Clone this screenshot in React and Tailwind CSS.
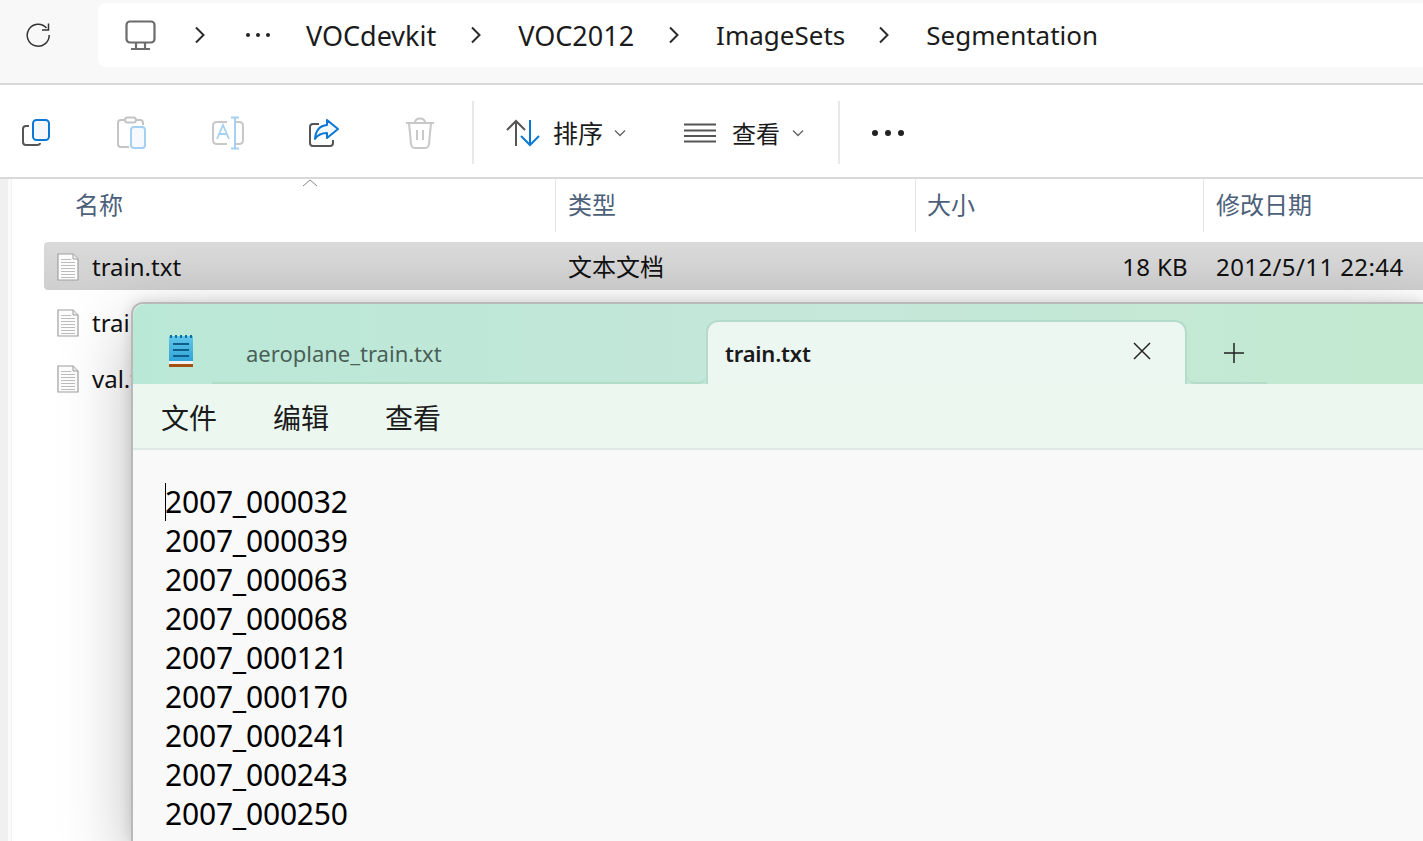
import React from "react";

const fontStack = { fontFamily: '"Noto Sans", "Noto Sans CJK SC", sans-serif' };

const Chevron = () => (
  <svg width="12" height="20" viewBox="0 0 12 20" className="shrink-0">
    <path d="M2 2.5 L9.5 10 L2 17.5" fill="none" stroke="#2b2b2b" strokeWidth="2" />
  </svg>
);

const SmallChevron = () => (
  <svg width="12" height="8" viewBox="0 0 12 8" className="shrink-0">
    <path d="M1 1.5 L6 6.5 L11 1.5" fill="none" stroke="#666" strokeWidth="1.4" />
  </svg>
);

const FileIcon = () => (
  <svg width="22" height="28" viewBox="0 0 22 28" className="shrink-0">
    <path d="M1 1 H16 L21 6 V27 H1 Z" fill="#fdfdfd" stroke="#a0a0a0" strokeWidth="1.2" />
    <path d="M16 1 V6 H21" fill="#eee" stroke="#a0a0a0" strokeWidth="1" />
    <path d="M4 6.5 H14 M4 9.5 H18 M4 12.5 H18 M4 15.5 H18 M4 18.5 H18 M4 21.5 H18 M4 24.5 H18" stroke="#bcbcbc" strokeWidth="1" />
  </svg>
);

const ToolbarIcons = {
  copy: (
    <svg width="30" height="30" viewBox="0 0 30 30">
      <path d="M8 8 H5 Q2 8 2 11 V24 Q2 27 5 27 H16 Q19 27 19 25" fill="none" stroke="#555" strokeWidth="2" />
      <rect x="12" y="2" width="16" height="20" rx="3.5" fill="#f4f8fc" stroke="#0a78d4" strokeWidth="2" />
    </svg>
  ),
  paste: (
    <svg width="30" height="34" viewBox="0 0 30 34">
      <path d="M12 31 H4 Q1 31 1 28 V7 Q1 4 4 4 H23 Q26 4 26 7 V9" fill="none" stroke="#c4c4c4" strokeWidth="2" />
      <rect x="8" y="1.5" width="11" height="5" rx="2.5" fill="#fff" stroke="#c4c4c4" strokeWidth="2" />
      <rect x="14" y="11" width="14" height="21" rx="3" fill="#f6fafe" stroke="#a6d0f2" strokeWidth="2" />
    </svg>
  ),
  rename: (
    <svg width="34" height="34" viewBox="0 0 34 34">
      <path d="M16 6 H6 Q2 6 2 10 V24 Q2 28 6 28 H16 M24 6 H28 Q32 6 32 10 V24 Q32 28 28 28 H24" fill="none" stroke="#c8c8c8" strokeWidth="2" />
      <path d="M6 23 L12 9 L18 23 M8.5 18 H15.5" fill="none" stroke="#a6d0f2" strokeWidth="1.8" />
      <path d="M20 1.5 H28 M24 1.5 V32.5 M20 32.5 H28" fill="none" stroke="#a6d0f2" strokeWidth="2" />
    </svg>
  ),
  share: (
    <svg width="32" height="30" viewBox="0 0 32 30">
      <path d="M11 6 H5 Q2 6 2 9 V25 Q2 28 5 28 H22 Q25 28 25 25 V22" fill="none" stroke="#555" strokeWidth="2" />
      <path d="M19 2 L30 11 L19 20 V15 Q11 15 7 21 Q8 8 19 7 Z" fill="#f4f8fc" stroke="#0a78d4" strokeWidth="2" strokeLinejoin="round" />
    </svg>
  ),
  trash: (
    <svg width="30" height="32" viewBox="0 0 30 32">
      <path d="M1 6 H29 M10 6 Q10 1.5 15 1.5 Q20 1.5 20 6 M4 6 L6 27 Q6.5 31 10 31 H20 Q23.5 31 24 27 L26 6" fill="none" stroke="#c8c8c8" strokeWidth="2" />
      <path d="M12 13 V23 M18 13 V23" stroke="#c8c8c8" strokeWidth="2" />
    </svg>
  ),
};

const files = [
  { name: "train.txt", selected: true },
  { name: "trainval.txt" },
  { name: "val.txt" },
];

const lines = [
  "2007_000032",
  "2007_000039",
  "2007_000063",
  "2007_000068",
  "2007_000121",
  "2007_000170",
  "2007_000241",
  "2007_000243",
  "2007_000250",
];

const App = () => {
  return (
    <div className="relative w-[1423px] h-[841px] overflow-hidden bg-white" style={fontStack}>
      {/* Address bar */}
      <div className="h-[85px] bg-[#f8f8f8] border-b-2 border-[#d9d9d9] flex items-start">
        <div className="w-[98px] h-[70px] flex items-center pl-[25px]">
          <svg width="26" height="26" viewBox="0 0 26 26">
            <path d="M21.5 6 A11 11 0 1 0 24.2 13" fill="none" stroke="#333" strokeWidth="1.5" />
            <path d="M23.5 1.5 V8 H17" fill="none" stroke="#333" strokeWidth="1.5" />
          </svg>
        </div>
        <div className="mt-[3px] flex-1 h-[64px] bg-white rounded-l-lg flex items-center pl-[27px]">
          <svg width="31" height="31" viewBox="0 0 31 31" className="shrink-0">
            <rect x="1.5" y="1.5" width="28" height="21" rx="3.5" fill="none" stroke="#6b6b6b" strokeWidth="2.2" />
            <path d="M11 23 V28 M20 23 V28 M6 29 H25" stroke="#6b6b6b" strokeWidth="2.2" />
          </svg>
          <div className="ml-[38px]"><Chevron /></div>
          <div className="ml-[40px] w-[24px] flex justify-between">
            <span className="w-[4px] h-[4px] rounded-full bg-[#222]" />
            <span className="w-[4px] h-[4px] rounded-full bg-[#222]" />
            <span className="w-[4px] h-[4px] rounded-full bg-[#222]" />
          </div>
          <span className="ml-[36px] text-[27px] leading-none text-[#1b1b1b]">VOCdevkit</span>
          <div className="ml-[34px]"><Chevron /></div>
          <span className="ml-[36px] text-[27px] leading-none text-[#1b1b1b]">VOC2012</span>
          <div className="ml-[34px]"><Chevron /></div>
          <span className="ml-[36px] text-[26px] leading-none text-[#1b1b1b]">ImageSets</span>
          <div className="ml-[33px]"><Chevron /></div>
          <span className="ml-[36px] text-[26px] leading-none text-[#1b1b1b]">Segmentation</span>
        </div>
      </div>

      {/* Command bar */}
      <div className="h-[94px] pt-[3px] border-b-2 border-[#d9d9d9] flex items-center">
        <div className="w-[472px] flex items-center">
          <div className="w-[84px] pl-[21px] flex">{ToolbarIcons.copy}</div>
          <div className="w-[96px] flex justify-center">{ToolbarIcons.paste}</div>
          <div className="w-[96px] flex justify-center">{ToolbarIcons.rename}</div>
          <div className="w-[96px] flex justify-center">{ToolbarIcons.share}</div>
          <div className="w-[96px] flex justify-center">{ToolbarIcons.trash}</div>
        </div>
        <div className="w-[2px] h-[63px] bg-[#e8e8e8]" />
        <div className="ml-[32px] flex items-center w-[146px]">
          <svg width="34" height="28" viewBox="0 0 34 28" className="shrink-0">
            <path d="M10 27 V2 M1 11 L10 2 L19 11" fill="none" stroke="#555" strokeWidth="2" />
            <path d="M24 1 V26 M15 17 L24 26 L33 17" fill="none" stroke="#0a78d4" strokeWidth="2" />
          </svg>
          <span className="ml-[13px] text-[25px] leading-none text-[#1b1b1b] mt-[2px]">排序</span>
          <div className="ml-[11px]"><SmallChevron /></div>
        </div>
        <div className="ml-[32px] flex items-center w-[122px]">
          <svg width="32" height="20" viewBox="0 0 32 20" className="shrink-0">
            <path d="M0 1.5 H32 M0 7.5 H32 M0 13 H32 M0 18.5 H32" stroke="#555" strokeWidth="1.8" />
          </svg>
          <span className="ml-[16px] text-[24px] leading-none text-[#1b1b1b] mt-[2px]">查看</span>
          <div className="ml-[12px]"><SmallChevron /></div>
        </div>
        <div className="ml-[32px] w-[2px] h-[63px] bg-[#e8e8e8]" />
        <div className="ml-[32px] flex gap-[7px]">
          <span className="w-[6px] h-[6px] rounded-full bg-[#222]" />
          <span className="w-[6px] h-[6px] rounded-full bg-[#222]" />
          <span className="w-[6px] h-[6px] rounded-full bg-[#222]" />
        </div>
      </div>

      {/* File list */}
      <div className="flex">
        <div className="w-[12px] h-[662px] bg-[#fbfbfb] border-l-8 border-r border-l-[#f0f0f0] border-r-[#f2f2f2] mr-[32px]" />
        <div className="flex-1">
          <div className="relative h-[53px] flex items-center text-[24px] text-[#4c607a]">
            <svg width="16" height="8" viewBox="0 0 16 8" className="absolute left-[258px] top-0">
              <path d="M1 7 L8 1 L15 7" fill="none" stroke="#888" strokeWidth="1" />
            </svg>
            <div className="w-[512px] h-full flex items-center pl-[31px] pb-[2px] leading-none border-r border-[#e5e5e5]">名称</div>
            <div className="w-[360px] h-full flex items-center pl-[12px] pb-[2px] leading-none border-r border-[#e5e5e5]">类型</div>
            <div className="w-[288px] h-full flex items-center pl-[11px] pb-[2px] leading-none border-r border-[#e5e5e5]">大小</div>
            <div className="pl-[12px] pb-[2px] leading-none">修改日期</div>
          </div>
          <div className="mt-[10px]">
            {files.map((file) => (
              <div
                key={file.name}
                className={`h-[48px] mb-[8px] pt-[2px] flex items-center rounded-l-sm text-[24px] text-[#111] ${
                  file.selected ? "bg-gradient-to-b from-[#dadada] to-[#cfcfcf]" : ""
                }`}
              >
                <div className="w-[524px] flex items-center pl-[13px]">
                  <FileIcon />
                  <span className="ml-[13px] leading-none">{file.name}</span>
                </div>
                {file.selected && (
                  <>
                    <span className="w-[500px] leading-none">文本文档</span>
                    <span className="w-[120px] text-right leading-none tracking-[0.3px]">18 KB</span>
                    <span className="ml-[28px] leading-none whitespace-nowrap tracking-[0.4px]">2012/5/11 22:44</span>
                  </>
                )}
              </div>
            ))}
          </div>
        </div>
      </div>

      {/* Notepad window */}
      <div className="absolute left-[131px] top-[302px] w-[1292px] h-[539px] flex flex-col bg-[#f9f9f9] border-l-2 border-t-2 border-[#b9b9b9] rounded-tl-xl shadow-[0_0_14px_rgba(0,0,0,0.14),0_24px_70px_rgba(0,0,0,0.26)]">
        <div className="h-[80px] shrink-0 bg-gradient-to-r from-[#bae8d6] via-[#c4e7da] to-[#c3e9d0] rounded-tl-xl flex items-end">
          <div className="w-[79px] h-[64px] flex items-center pl-[35px] pb-[2px]">
            <svg width="26" height="34" viewBox="0 0 26 34">
              <defs>
                <linearGradient id="padFill" x1="0" y1="0" x2="0" y2="1">
                  <stop offset="0" stopColor="#62c6ea" />
                  <stop offset="1" stopColor="#2ea3d6" />
                </linearGradient>
              </defs>
              <rect x="1" y="2" width="24" height="26" fill="url(#padFill)" />
              <rect x="1" y="27" width="24" height="3" fill="#f2f2f2" />
              <rect x="1" y="30" width="24" height="3" fill="#a5500f" />
              <path d="M3 1 V4 M8 1 V4 M13 1 V4 M18 1 V4 M23 1 V4" stroke="#0f6f9e" strokeWidth="2" />
              <path d="M5 10 H21 M5 16 H21 M5 22 H21" stroke="#0c5f88" strokeWidth="2" />
            </svg>
          </div>
          <div className="w-[494px] h-[64px] border-b-2 border-[#b0dcc8] rounded-br-lg flex items-center pl-[34px] pt-[4px] text-[22px] text-[#4a5f57]">
            aeroplane_train.txt
          </div>
          <div className="w-[481px] h-[64px] bg-[#edf7f2] rounded-t-xl border-t-2 border-x-2 border-[#b5dccb] border-b-0 flex items-center justify-between pl-[17px] pr-[33px]">
            <span className="text-[22px] font-semibold text-[#1a1a1a] tracking-[-0.2px]">train.txt</span>
            <svg width="20" height="20" viewBox="0 0 20 20" className="-mt-[4px]">
              <path d="M2 2 L18 18 M18 2 L2 18" stroke="#222" strokeWidth="1.5" />
            </svg>
          </div>
          <div className="w-[80px] h-[64px] border-b-2 border-[#b5dccb] rounded-bl-lg flex items-center justify-center pl-[14px] pt-[4px]">
            <svg width="20" height="20" viewBox="0 0 20 20">
              <path d="M10 0 V20 M0 10 H20" stroke="#222" strokeWidth="1.5" />
            </svg>
          </div>
        </div>
        <div className="h-[66px] shrink-0 bg-[#ecf7f0] border-b-2 border-[#dfeae4] flex items-center pl-[28px] pt-[4px] gap-[56px] text-[28px] leading-none text-[#1b1b1b]">
          <span>文件</span>
          <span>编辑</span>
          <span>查看</span>
        </div>
        <div className="relative pl-[32px] pt-[32px] text-[30px] leading-[39px] text-[#000] tracking-[-0.2px]">
          <span className="absolute left-[32px] top-[33px] w-[1px] h-[38px] bg-black" />
          {lines.map((line) => (
            <div key={line}>{line}</div>
          ))}
        </div>
      </div>
    </div>
  );
};

export default App;
